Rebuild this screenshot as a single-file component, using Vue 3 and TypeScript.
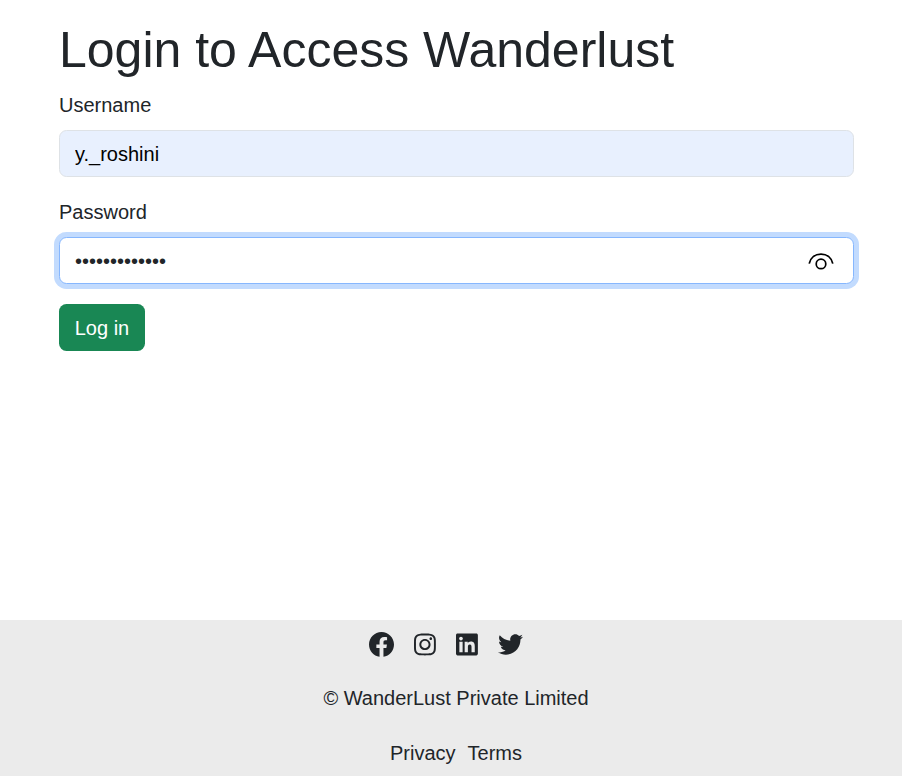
<script setup lang="ts">
import { ref } from 'vue'

interface SocialIcon {
  name: string
  viewBox: string
  width: number
  path: string
}

const username = ref('y._roshini')
const password = ref('•••••••••••••')

const icons: SocialIcon[] = [
  {
    name: 'facebook',
    viewBox: '8 8 496 496',
    width: 25,
    path: 'M504 256C504 119 393 8 256 8S8 119 8 256c0 123.78 90.69 226.38 209.25 245V327.69h-63V256h63v-54.64c0-62.15 37-96.48 93.67-96.48 27.14 0 55.52 4.84 55.52 4.84v61h-31.28c-30.8 0-40.41 19.12-40.41 38.73V256h68.78l-11 71.69h-57.78V501C413.31 482.38 504 379.78 504 256z',
  },
  {
    name: 'instagram',
    viewBox: '0 0 448 512',
    width: 21.875,
    path: 'M224.1 141c-63.6 0-114.9 51.3-114.9 114.9s51.3 114.9 114.9 114.9S339 319.5 339 255.9 287.7 141 224.1 141zm0 189.6c-41.1 0-74.7-33.5-74.7-74.7s33.5-74.7 74.7-74.7 74.7 33.5 74.7 74.7-33.6 74.7-74.7 74.7zm146.4-194.3c0 14.9-12 26.8-26.8 26.8-14.9 0-26.8-12-26.8-26.8s12-26.8 26.8-26.8 26.8 12 26.8 26.8zm76.1 27.2c-1.7-35.9-9.9-67.7-36.2-93.9-26.2-26.2-58-34.4-93.9-36.2-37-2.1-147.9-2.1-184.9 0-35.8 1.7-67.6 9.9-93.9 36.1s-34.4 58-36.2 93.9c-2.1 37-2.1 147.9 0 184.9 1.7 35.9 9.9 67.7 36.2 93.9s58 34.4 93.9 36.2c37 2.1 147.9 2.1 184.9 0 35.9-1.7 67.7-9.9 93.9-36.2 26.2-26.2 34.4-58 36.2-93.9 2.1-37 2.1-147.8 0-184.8zM398.8 388c-7.8 19.6-22.9 34.7-42.6 42.6-29.5 11.7-99.5 9-132.1 9s-102.7 2.6-132.1-9c-19.6-7.8-34.7-22.9-42.6-42.6-11.7-29.5-9-99.5-9-132.1s-2.6-102.7 9-132.1c7.8-19.6 22.9-34.7 42.6-42.6 29.5-11.7 99.5-9 132.1-9s102.7-2.6 132.1 9c19.6 7.8 34.7 22.9 42.6 42.6 11.7 29.5 9 99.5 9 132.1s2.7 102.7-9 132.1z',
  },
  {
    name: 'linkedin',
    viewBox: '0 0 448 512',
    width: 21.875,
    path: 'M416 32H31.9C14.3 32 0 46.5 0 64.3v383.4C0 465.5 14.3 480 31.9 480H416c17.6 0 32-14.5 32-32.3V64.3c0-17.8-14.4-32.3-32-32.3zM135.4 416H69V202.2h66.5V416zm-33.2-243c-21.3 0-38.5-17.3-38.5-38.5S80.9 96 102.2 96c21.2 0 38.5 17.3 38.5 38.5 0 21.3-17.2 38.5-38.5 38.5zm282.1 243h-66.4V312c0-24.8-.5-56.7-34.5-56.7-34.6 0-39.9 27-39.9 54.9V416h-66.4V202.2h63.7v29.2h.9c8.9-16.8 30.6-34.5 62.9-34.5 67.2 0 79.7 44.3 79.7 101.9V416z',
  },
  {
    name: 'twitter',
    viewBox: '0 0 512 512',
    width: 25,
    path: 'M459.37 151.716c.325 4.548.325 9.097.325 13.645 0 138.72-105.583 298.558-298.558 298.558-59.452 0-114.68-17.219-161.137-47.106 8.447.974 16.568 1.299 25.34 1.299 49.055 0 94.213-16.568 130.274-44.832-46.132-.975-84.792-31.188-98.112-72.772 6.498.974 12.995 1.624 19.818 1.624 9.421 0 18.843-1.3 27.614-3.573-48.081-9.747-84.143-51.98-84.143-102.985v-1.299c13.969 7.797 30.214 12.67 47.431 13.319-28.264-18.843-46.781-51.005-46.781-87.391 0-19.492 5.197-37.36 14.294-52.954 51.655 63.675 129.3 105.258 216.365 109.807-1.624-7.797-2.599-15.918-2.599-24.04 0-57.828 46.782-104.934 104.934-104.934 30.213 0 57.502 12.67 76.67 33.137 23.715-4.548 46.456-13.32 66.599-25.34-7.798 24.366-24.366 44.833-46.132 57.827 21.117-2.273 41.584-8.122 60.426-16.243-14.292 20.791-32.161 39.308-52.628 54.253z',
  },
]
</script>

<template>
  <div class="page">
    <main class="content">
      <h1 class="title">Login to Access Wanderlust</h1>
      <form @submit.prevent>
        <div class="field">
          <label class="label" for="username">Username</label>
          <div class="control filled">
            <input id="username" v-model="username" class="input" type="text" />
          </div>
        </div>
        <div class="field">
          <label class="label" for="password">Password</label>
          <div class="control focused">
            <input id="password" v-model="password" class="input" type="text" />
            <svg class="eye" width="28" height="20" viewBox="0 0 28 20" fill="none" stroke="#000">
              <path d="M2.200 12.600C3.400 6.800 8 3.100 14 3.100S24.600 6.800 25.800 12.600" stroke-width="1.750" />
              <circle cx="14" cy="12.900" r="4.800" stroke-width="1.700" />
            </svg>
          </div>
        </div>
        <button class="submit" type="submit">Log in</button>
      </form>
    </main>
    <footer class="footer">
      <div class="socials">
        <svg
          v-for="icon in icons"
          :key="icon.name"
          :viewBox="icon.viewBox"
          :width="icon.width"
          height="25"
          fill="currentColor"
        >
          <path :d="icon.path" />
        </svg>
      </div>
      <div class="copyright">© WanderLust Private Limited</div>
      <div class="links">
        <a>Privacy</a>
        <a>Terms</a>
      </div>
    </footer>
  </div>
</template>

<style>
body {
  margin: 0;
  background: #fff;
}
</style>

<style scoped>
.page {
  display: flex;
  flex-direction: column;
  box-sizing: border-box;
  height: 776px;
  font-family: 'Liberation Sans', Arial, sans-serif;
  font-size: 20px;
  line-height: 30px;
  color: #212529;
}

.content {
  flex: 1;
  padding: 20px 48px 0 59px;
}

.title {
  margin: 0 0 10px;
  font-size: 50px;
  font-weight: 400;
  line-height: 60px;
}

.field {
  margin-bottom: 20px;
}

.label {
  display: block;
  margin-bottom: 10px;
}

.control {
  display: flex;
  align-items: center;
  box-sizing: border-box;
  height: 47px;
  padding: 0 18px 0 15px;
  border: 1px solid #dee2e6;
  border-radius: 7.5px;
  background: #fff;
}

.filled {
  background: #e8f0fe;
  color: #000;
}

.focused {
  border-color: #86b7fe;
  box-shadow: 0 0 0 5px #c2dbfe;
}

.input {
  flex: 1;
  min-width: 0;
  padding: 0;
  border: 0;
  outline: 0;
  background: transparent;
  color: inherit;
  font: inherit;
}

.eye {
  flex: none;
}

.submit {
  display: block;
  box-sizing: border-box;
  height: 47px;
  width: 86px;
  padding: 0;
  border: 0;
  border-radius: 7.5px;
  background: #198754;
  color: #fff;
  font: inherit;
}

.footer {
  display: flex;
  flex-direction: column;
  align-items: center;
  box-sizing: border-box;
  height: 156px;
  padding: 12px 0 0 10px;
  background: #ebebeb;
}

.socials {
  display: flex;
  gap: 20px;
  margin-right: 19.4px;
}

.copyright {
  margin-top: 26px;
}

.links {
  display: flex;
  gap: 12px;
  margin-top: 25px;
}
</style>
